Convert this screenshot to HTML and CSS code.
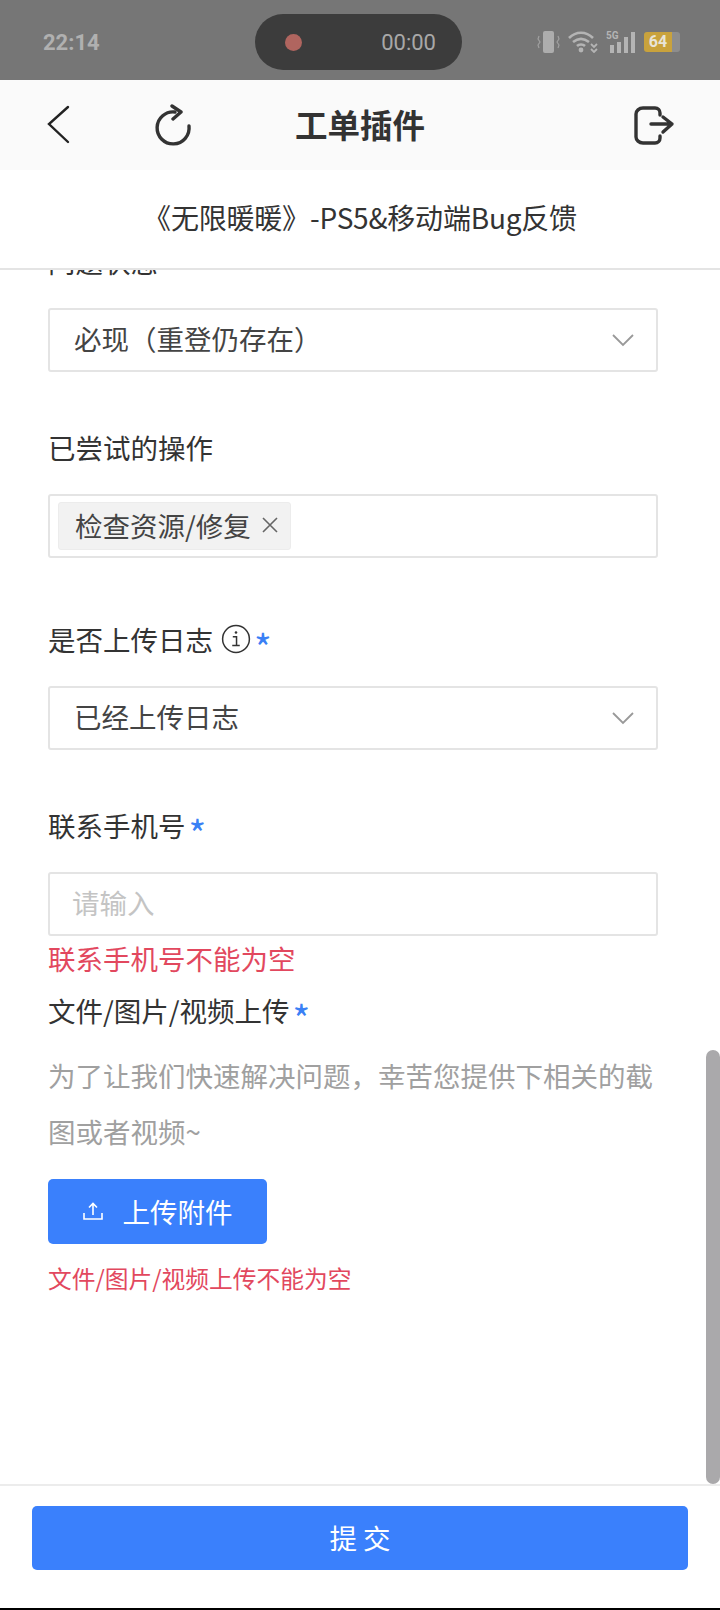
FILE: index.html

```html
<!DOCTYPE html>
<html lang="zh-CN">
<head>
    <meta charset="UTF-8">
    <meta name="viewport" content="width=device-width, initial-scale=1.0">
    <title>工单插件</title>
    <link rel="stylesheet" href="styles.css">
</head>
<body>
    <div class="status-bar">
        <span class="clock">22:14</span>
        <div class="recorder">
            <span class="rec-dot"></span>
            <span class="rec-time">00:00</span>
        </div>
        <div class="status-icons">
            <svg width="23" height="22" viewBox="0 0 23 22" fill="none">
                <rect x="6" y="0" width="11" height="22" rx="2" fill="#adadad"/>
                <path d="M2 5L1 8l2 3-2 3 1 3M21 5l1 3-2 3 2 3-1 3" stroke="#a0a0a0" stroke-width="1.2"/>
            </svg>
            <svg width="30" height="22" viewBox="0 0 30 22" fill="none" stroke="#b4b4b4" stroke-width="2.6">
                <path d="M1 7c7-7 17-7 24 0M5 11c5-4 11-4 16 0M9 15c2-2 6-2 8 0"/>
                <circle cx="13" cy="19" r="2.4" fill="#b4b4b4" stroke="none"/>
                <path d="M23 13l3 3 3-3M23 18l3 3 3-3" stroke-width="1.8"/>
            </svg>
            <div class="signal">
                <span class="net">5G</span>
                <span class="bar bar1"></span>
                <span class="bar bar2"></span>
                <span class="bar bar3"></span>
                <span class="bar bar4"></span>
            </div>
            <div class="battery">
                <span class="battery-level">64</span>
                <span class="battery-rest"></span>
            </div>
        </div>
    </div>

    <div class="nav-bar">
        <svg class="nav-icon back" width="24" height="42" viewBox="0 0 24 42" fill="none" stroke="#222" stroke-width="2.4" stroke-linecap="round">
            <path d="M22 3L3 20l19 18"/>
        </svg>
        <svg class="nav-icon reload" width="42" height="42" viewBox="0 0 42 42" fill="none" stroke="#333" stroke-width="3.4" stroke-linecap="round" stroke-linejoin="round">
            <path d="M35 22A16 16 0 1 1 21 8"/>
            <path d="M18 2l9 6-8 7"/>
        </svg>
        <h1 class="nav-title">工单插件</h1>
        <svg class="nav-icon logout" width="42" height="42" viewBox="0 0 42 42" fill="none" stroke="#333" stroke-width="3.4" stroke-linecap="round" stroke-linejoin="round">
            <path d="M27 11V9c0-3-2-5-5-5H10C6 4 3 7 3 10v23c0 3 3 6 7 6h12c3 0 5-2 5-5v-2"/>
            <path d="M18 20h21M30 13l9 7-9 8"/>
        </svg>
    </div>

    <div class="form-title">《无限暖暖》-PS5&amp;移动端Bug反馈</div>

    <div class="scroll-area">
        <form class="form">
            <div class="field">
                <div class="label">问题状态</div>
                <div class="select">
                    <span>必现（重登仍存在）</span>
                    <svg class="arrow" width="22" height="14" viewBox="0 0 22 14" fill="none" stroke="#999" stroke-width="1.8"><path d="M1 2l10 10L21 2"/></svg>
                </div>
            </div>
            <div class="field wide">
                <div class="label">已尝试的操作</div>
                <div class="select multi">
                    <span class="tag">检查资源/修复 <svg width="16" height="16" viewBox="0 0 16 16" stroke="#666" stroke-width="1.6"><path d="M1 1l14 14M15 1L1 15"/></svg></span>
                </div>
            </div>
            <div class="field">
                <div class="label">是否上传日志
                    <svg class="info" width="30" height="30" viewBox="0 0 28 28" fill="none" stroke="#333" stroke-width="1.4">
                        <circle cx="14" cy="14" r="12.5"/>
                        <path d="M11 12h3.5v8M10.5 20h7"/>
                        <circle cx="14" cy="8" r="1.2" fill="#333" stroke="none"/>
                    </svg>
                    <span class="star">*</span>
                </div>
                <div class="select">
                    <span>已经上传日志</span>
                    <svg class="arrow" width="22" height="14" viewBox="0 0 22 14" fill="none" stroke="#999" stroke-width="1.8"><path d="M1 2l10 10L21 2"/></svg>
                </div>
            </div>
            <div class="field tight">
                <div class="label">联系手机号 <span class="star">*</span></div>
                <div class="select placeholder">请输入</div>
                <div class="error">联系手机号不能为空</div>
            </div>
            <div class="field">
                <div class="label">文件/图片/视频上传 <span class="star">*</span></div>
                <p class="hint">为了让我们快速解决问题，幸苦您提供下相关的截图或者视频~</p>
                <button type="button" class="upload-btn">
                    <svg width="20" height="20" viewBox="0 0 20 20" fill="none" stroke="#fff" stroke-width="1.6">
                        <path d="M10 14V3M6 6.5L10 2.5l4 4M1 12v6h18v-6"/>
                    </svg>
                    上传附件
                </button>
                <div class="error small">文件/图片/视频上传不能为空</div>
            </div>
        </form>
        <div class="scroll-thumb"></div>
    </div>

    <div class="footer">
        <button type="button" class="submit-btn">提 交</button>
    </div>
</body>
</html>
```

FILE: styles.css

```css
* {
    box-sizing: border-box;
}
html, body {
    height: 100%;
}
body {
    margin: 0;
    display: flex;
    flex-direction: column;
    font-family: "Noto Sans CJK SC", "Noto Sans", sans-serif;
    color: #333;
    background: #fff;
    border-bottom: 2px solid #000;
    overflow: hidden;
}

/* status bar */
.status-bar {
    height: 80px;
    flex: none;
    background: #767676;
    display: flex;
    align-items: center;
    padding: 4px 40px 0 43px;
}
.clock {
    width: 212px;
    color: #b0b0b0;
    font: bold 22px "Roboto", sans-serif;
}
.recorder {
    width: 207px;
    height: 56px;
    border-radius: 28px;
    background: #3c3c3c;
    display: flex;
    align-items: center;
    justify-content: space-between;
    padding: 0 26px 0 30px;
}
.rec-dot {
    width: 17px;
    height: 17px;
    border-radius: 50%;
    background: #b0655f;
}
.rec-time {
    color: #a8a8a8;
    font: 22px "Roboto", sans-serif;
}
.status-icons {
    margin-left: auto;
    display: flex;
    align-items: center;
    gap: 8px;
}
.signal {
    position: relative;
    width: 29px;
    height: 22px;
    display: flex;
    align-items: flex-end;
    justify-content: flex-end;
    gap: 3px;
}
.net {
    position: absolute;
    left: 0;
    top: -1px;
    color: #b4b4b4;
    font: bold 10px "Roboto", sans-serif;
}
.bar {
    width: 4px;
    background: #b4b4b4;
}
.bar1 { height: 8px; }
.bar2 { height: 11px; }
.bar3 { height: 16px; }
.bar4 { height: 21px; }
.battery {
    display: flex;
    align-items: center;
    margin-left: 1px;
}
.battery-level {
    width: 28px;
    height: 20px;
    background: #c9a23c;
    border-radius: 3px 0 0 3px;
    color: #e8e4d8;
    font: bold 16px/20px "Roboto", sans-serif;
    text-align: center;
}
.battery-rest {
    width: 8px;
    height: 20px;
    background: #8d8d8d;
    border-radius: 0 3px 3px 0;
}

/* top nav */
.nav-bar {
    position: relative;
    height: 90px;
    flex: none;
    background: #fafafa;
    display: flex;
    align-items: center;
    padding: 0 45px 0 46px;
}
.nav-icon {
    flex: none;
}
.reload {
    margin-left: 84px;
}
.logout {
    margin-left: auto;
}
.nav-title {
    position: absolute;
    left: 0;
    right: 0;
    top: 20px;
    margin: 0;
    text-align: center;
    font-size: 32.5px;
    font-weight: bold;
    color: #333;
}
.form-title {
    height: 100px;
    flex: none;
    display: flex;
    align-items: center;
    justify-content: center;
    padding-bottom: 4px;
    font-size: 28px;
    letter-spacing: -0.2px;
    color: #333;
    background: #fff;
    border-bottom: 2px solid #e4e4e4;
    position: relative;
    z-index: 1;
}

/* form */
.scroll-area {
    position: relative;
    flex: 1;
    overflow: hidden;
}
.form {
    margin-top: -29px;
    padding: 0 62px 0 48px;
}
.field {
    margin-bottom: 55px;
}
.field.wide {
    margin-bottom: 61px;
}
.field.tight {
    margin-bottom: 12px;
}
.label {
    display: flex;
    align-items: center;
    gap: 3px;
    height: 40px;
    margin-bottom: 27px;
    font-size: 27.5px;
    color: #333;
}
.star {
    color: #3a80f5;
    font-size: 38px;
    line-height: 56px;
    height: 40px;
}
.info {
    flex: none;
    margin-left: 5px;
}
.select {
    height: 64px;
    border: 2px solid #e4e4e4;
    border-radius: 3px;
    display: flex;
    align-items: center;
    justify-content: space-between;
    padding: 0 22px 4px 24px;
    font-size: 27.5px;
    color: #444;
}
.select .arrow {
    margin-top: 4px;
}
.select.multi {
    justify-content: flex-start;
    padding: 0 8px;
}
.select.placeholder {
    padding-left: 22px;
    color: #c4c4c4;
}
.tag {
    height: 48px;
    display: flex;
    align-items: center;
    gap: 11px;
    padding: 0 12px 3px 16px;
    background: #f2f2f2;
    border: 1px solid #ececec;
    border-radius: 3px;
}
.error {
    margin-top: 2px;
    height: 40px;
    line-height: 40px;
    font-size: 27.5px;
    color: #e2485e;
}
.error.small {
    margin-top: 14px;
    font-size: 23.75px;
}
.hint {
    margin: -10px 0 20px;
    font-size: 27.5px;
    line-height: 56px;
    color: #a0a0a0;
}
.upload-btn {
    width: 219px;
    height: 65px;
    border: none;
    border-radius: 5px;
    background: #3a80fc;
    color: #fff;
    display: flex;
    align-items: center;
    justify-content: center;
    gap: 20px;
    padding-bottom: 3px;
    font-family: inherit;
    font-size: 27.5px;
}
.scroll-thumb {
    position: absolute;
    right: 0;
    top: 780px;
    width: 14px;
    height: 434px;
    border-radius: 7px;
    background: #aaa9ab;
}

/* bottom submit */
.footer {
    height: 124px;
    flex: none;
    border-top: 2px solid #ececec;
    padding: 20px 32px 0;
    background: #fff;
}
.submit-btn {
    width: 100%;
    height: 64px;
    border: none;
    border-radius: 5px;
    background: #3a80fc;
    color: #fff;
    padding-bottom: 4px;
    font-family: inherit;
    font-size: 27.5px;
}
```
